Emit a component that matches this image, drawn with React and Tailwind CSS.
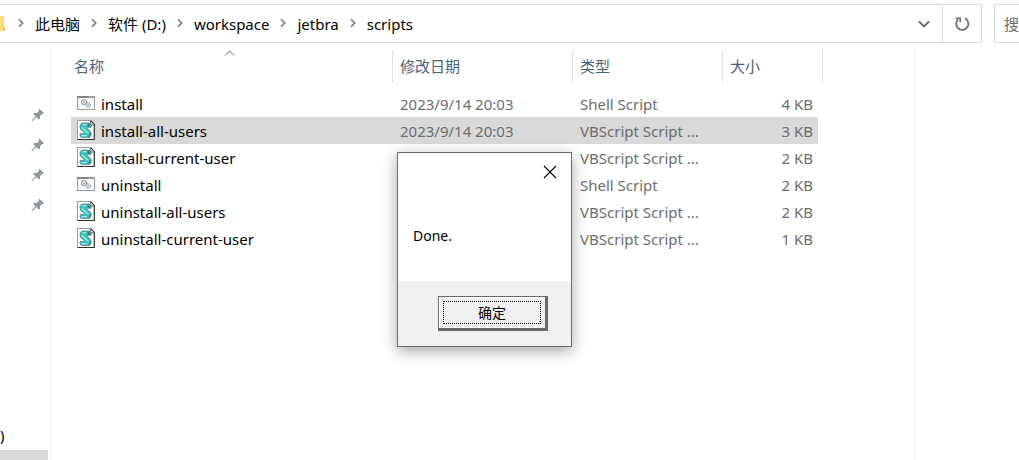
import { useState } from 'react'

const path = ['此电脑', '软件 (D:)', 'workspace', 'jetbra', 'scripts']

const files = [
  { name: 'install', date: '2023/9/14 20:03', type: 'Shell Script', size: '4 KB' },
  { name: 'install-all-users', date: '2023/9/14 20:03', type: 'VBScript Script ...', size: '3 KB' },
  { name: 'install-current-user', date: '2023/9/14 20:03', type: 'VBScript Script ...', size: '2 KB' },
  { name: 'uninstall', date: '2023/9/14 20:03', type: 'Shell Script', size: '2 KB' },
  { name: 'uninstall-all-users', date: '2023/9/14 20:03', type: 'VBScript Script ...', size: '2 KB' },
  { name: 'uninstall-current-user', date: '2023/9/14 20:03', type: 'VBScript Script ...', size: '1 KB' },
]

const Chevron = () => (
  <svg className="w-7 h-3 shrink-0" viewBox="0 0 28 12" fill="none" stroke="#777" strokeWidth="1.6">
    <path d="M12 1.2 L15.7 5 L12 8.8" />
  </svg>
)

const ShellIcon = () => (
  <svg className="w-[18px] h-[21px] shrink-0" viewBox="0 0 18 21" fill="none">
    <rect x="0.5" y="3.5" width="17" height="13" fill="#fafafa" stroke="#9a9a9a" />
    <path d="M0 4 H18" stroke="#858585" strokeWidth="2" />
    <path d="M12 4 h1 M14 4 h1 M16 4 h1" stroke="#e8e8e8" />
    <circle cx="7" cy="9" r="2.5" stroke="#777" strokeWidth="1.1" strokeDasharray="1.2 0.6" />
    <circle cx="7" cy="9" r="0.9" stroke="#999" strokeWidth="0.7" />
    <circle cx="11.3" cy="12" r="2.3" fill="#eef4f9" stroke="#8299aa" strokeWidth="1" strokeDasharray="1.2 0.5" />
    <circle cx="11.3" cy="12" r="0.8" stroke="#8299aa" strokeWidth="0.7" />
  </svg>
)

const ScriptIcon = () => (
  <svg className="w-[18px] h-[21px] shrink-0" viewBox="0 0 18 21" fill="none">
    <path d="M0.5 0.5 H13.5 L17.5 4.8 V19.5 H0.5 Z" fill="#fff" />
    <path d="M0.5 19.5 V0.5 H13.5" stroke="#999" />
    <path d="M13.5 0.5 L17.3 4.5 V19.5 H0.5" stroke="#2e2e2e" strokeWidth="1.2" />
    <path d="M13.3 1 V5 H17" fill="#ddd" stroke="#444" strokeWidth="0.8" />
    <path d="M5 3 H12 Q14.6 3.8 14.2 7.3 H10.5 Q9.3 7.6 10.2 8.6 L13.6 11.4 Q15.6 14.6 12.6 17.4 H4.4 Q2.2 16.2 3.2 13.6 H7.2 Q8 13 7 12.2 L3.6 9.4 Q1.6 5.4 5 3 Z" fill="#38c4be" stroke="#4d7f82" strokeWidth="0.8" />
    <path d="M5.5 4.6 H9.5 M4.6 7.4 L11.6 13.4 M4.4 15.6 H10" stroke="#9df0ea" strokeWidth="1.3" />
    <path d="M10.4 4 Q12.6 3.8 13.4 6.4 H10.6 Z" fill="#4b6063" />
    <path d="M12 16.6 Q13.6 15 12.6 13" stroke="#2b6a6c" strokeWidth="0.9" />
  </svg>
)

const PinIcon = () => (
  <svg className="w-[14px] h-[14px]" viewBox="0 0 14 14" fill="#8d979f">
    <path d="M8.4 0.8 L13 5.2 L11.8 6.1 L11 5.9 L9 8.1 L9 10.7 L7.9 11.4 L5.5 9.1 L1.3 13.2 L0.5 13.3 L0.7 12.5 L4.6 8.2 L2.2 5.9 L3 4.9 L5.8 5 L8 2.9 L7.6 1.8 Z" />
  </svg>
)

const AddressBar = () => (
  <header className="flex gap-3 pt-1">
    <div className="flex flex-1 h-[39px] border-y border-r border-[#d9d9d9]">
      <nav className="flex flex-1 items-center" aria-label="path">
        <svg className="w-[7px] h-4 shrink-0" viewBox="0 0 7 16">
          <path d="M0 0 H4 V10 H5 V15 H0 Z" fill="#fbdc7c" />
          <path d="M3 11 H5 V15 H3 Z" fill="#f0c75a" />
        </svg>
        {path.map(p => (
          <div key={p} className="flex items-center">
            <Chevron />
            <button className="whitespace-nowrap">{p}</button>
          </div>
        ))}
      </nav>
      <button aria-label="history" className="flex items-center justify-center w-9">
        <svg className="w-3 h-3" viewBox="0 0 12 12" fill="none" stroke="#666" strokeWidth="1.8">
          <path d="M1 3.5 L6 8.5 L11 3.5" />
        </svg>
      </button>
      <button aria-label="refresh" className="flex items-center justify-center w-[39px] border-l border-[#d9d9d9]">
        <svg className="w-4 h-4" viewBox="0 0 16 16" fill="none" stroke="#6e6e6e" strokeWidth="1.8">
          <path d="M11 2.3 A6.1 6.1 0 1 1 4 3.4" />
          <path d="M1.8 2.2 H6.2 V6.4" strokeWidth="1.6" />
        </svg>
      </button>
    </div>
    <input aria-label="search" placeholder="搜"
      className="w-[25px] h-[39px] pl-[9px] border-y border-l border-[#d9d9d9] outline-none placeholder:text-[#6d6d6d]" />
  </header>
)

const Sidebar = () => (
  <aside className="flex flex-col justify-between w-[51px] shrink-0 pt-[51px] border-r border-[#f3f3f3]">
    <ul>
      {[1, 2, 3, 4].map(n => (
        <li key={n} className="flex items-center justify-end h-[30px] pr-[5px]"><PinIcon /></li>
      ))}
    </ul>
    <div>
      <div className="flex items-center h-[30px]">)</div>
      <div className="h-[10px] mr-[2px] bg-[#d9d9d9]" />
    </div>
  </aside>
)

const HeadCell = ({ label, pad, sorted }) => (
  <th className="p-0 pt-px pb-2 font-normal text-left text-[#4c607a]">
    <div className={`relative flex items-center h-8 border-r border-[#e2e2e2] ${pad}`}>
      {label}
      {sorted && (
        <svg className="absolute top-0 left-[153px] w-[11px] h-[7px]" viewBox="0 0 11 7" fill="none" stroke="#666">
          <path d="M1 5.5 L5.5 1 L10 5.5" />
        </svg>
      )}
    </div>
  </th>
)

const FileTable = ({ selected, onSelect }) => (
  <table className="table-fixed w-[752px] border-collapse">
    <colgroup>
      <col className="w-[322px]" />
      <col className="w-[180px]" />
      <col className="w-[150px]" />
      <col className="w-[95px]" />
      <col className="w-[5px]" />
    </colgroup>
    <thead>
      <tr>
        <HeadCell label="名称" pad="pl-[3px]" sorted />
        <HeadCell label="修改日期" pad="pl-[7px]" />
        <HeadCell label="类型" pad="pl-[7px]" />
        <th className="p-0 pt-px pb-2 font-normal text-left text-[#4c607a]">
          <div className="flex items-center h-8 pl-[7px]">大小</div>
        </th>
        <HeadCell label="" pad="" />
      </tr>
    </thead>
    <tbody>
      {files.map(f => {
        const bg = f.name === selected ? 'bg-[#d9d9d9]' : ''
        return (
          <tr key={f.name} onClick={() => onSelect(f.name)} className="h-[27px] text-[#6d6d6d] whitespace-nowrap">
            <td className={`p-0 ${bg}`}>
              <div className="flex items-center gap-[6px] pl-[6px] text-black">
                {f.type === 'Shell Script' ? <ShellIcon /> : <ScriptIcon />}
                {f.name}
              </div>
            </td>
            <td className={`p-0 pl-[7px] ${bg}`}>{f.date}</td>
            <td className={`p-0 pl-[7px] ${bg}`}>{f.type}</td>
            <td className={`p-0 pr-[5px] text-right ${bg}`}>{f.size}</td>
            <td className="p-0" />
          </tr>
        )
      })}
    </tbody>
  </table>
)

const DoneDialog = ({ onClose }) => (
  <div role="dialog" aria-label="Done"
    className="absolute left-[397px] top-[152px] flex flex-col w-[175px] h-[195px] bg-white border border-[#6b6b6b] text-sm shadow-[0_4px_14px_rgba(0,0,0,0.35)]">
    <div className="flex justify-end pt-3 pr-[14px]">
      <button aria-label="close" onClick={onClose}>
        <svg className="w-[14px] h-[14px]" viewBox="0 0 14 14" fill="none" stroke="#000" strokeWidth="1.1">
          <path d="M1 1 L13 13 M13 1 L1 13" />
        </svg>
      </button>
    </div>
    <p className="flex-1 pt-[47px] pl-[15px]">Done.</p>
    <div className="flex justify-end h-[65px] pt-[15px] pr-[23px] bg-[#f0f0f0]">
      <button onClick={onClose}
        className="w-[110px] h-[35px] p-1 border border-r-3 border-b-3 border-[#696969] bg-[#f0f0f0] shadow-[inset_1px_1px_0_#fff]">
        <span className="flex items-center justify-center h-full border border-dotted border-black">确定</span>
      </button>
    </div>
  </div>
)

export default function App() {
  const [selected, setSelected] = useState('install-all-users')
  const [open, setOpen] = useState(true)

  return (
    <div className="relative flex flex-col h-screen overflow-hidden bg-white text-black text-[15px] leading-5 font-['Noto_Sans','Noto_Sans_CJK_SC',sans-serif]">
      <AddressBar />
      <div className="flex flex-1 pt-[6px]">
        <Sidebar />
        <main className="flex-1 pl-5">
          <FileTable selected={selected} onSelect={setSelected} />
        </main>
        {/* empty preview pane */}
        <div className="w-[105px] shrink-0 border-l border-[#f3f3f3]" />
      </div>
      {open && <DoneDialog onClose={() => setOpen(false)} />}
    </div>
  )
}
